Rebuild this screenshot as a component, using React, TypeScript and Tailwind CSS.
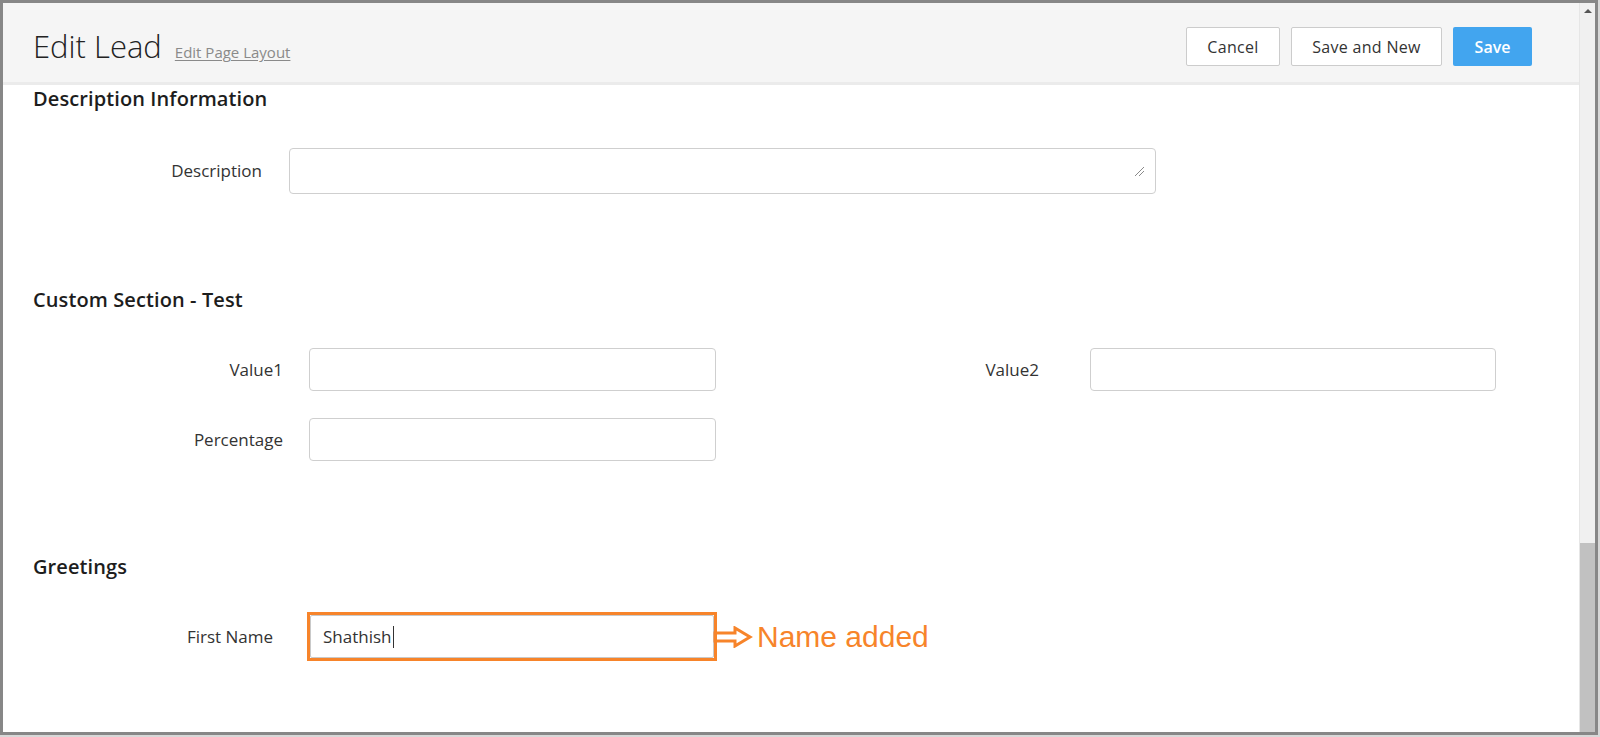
import React from "react";

const font = { fontFamily: '"Open Sans", "Liberation Sans", sans-serif' };

function Field({ className = "" }: { className?: string }) {
  return (
    <div
      className={`h-[43px] rounded-[4px] border-[1.5px] border-[#cfcfcf] bg-white ${className}`}
    />
  );
}

export default function App() {
  return (
    <div className="w-[1600px] h-[737px] bg-[#d8d8d8] overflow-hidden" style={font}>
      <div className="w-[1598px] h-[735px] border-[3px] border-[#878787] bg-white flex">
        {/* main */}
        <div className="flex-1 flex flex-col min-w-0">
          {/* header */}
          <div className="h-[82px] shrink-0 bg-[#f5f5f5] border-b-[3px] border-[#ebebeb] flex items-start justify-between pl-[30px] pr-[47px] pt-[24px]">
            <div className="h-[39px] flex items-center">
              <div className="flex items-baseline gap-[13px] mt-[2px]">
                <span className="text-[31px] font-light text-[#222] leading-none">
                  Edit Lead
                </span>
                <span className="text-[15px] text-[#8a8a8a] underline underline-offset-2">
                  Edit Page Layout
                </span>
              </div>
            </div>
            <div className="flex items-center gap-[11px]">
              <button className="w-[94px] h-[39px] rounded-[2px] border-[1.5px] border-[#cccccc] bg-white text-[16px] tracking-[0.3px] text-[#333]">
                Cancel
              </button>
              <button className="w-[151px] h-[39px] rounded-[2px] border-[1.5px] border-[#cccccc] bg-white text-[16px] tracking-[0.3px] text-[#333]">
                Save and New
              </button>
              <button className="w-[79px] h-[39px] rounded-[2px] bg-[#42a5ef] text-[16px] font-semibold text-white">
                Save
              </button>
            </div>
          </div>

          {/* content */}
          <div className="flex-1 flex flex-col pl-[30px]">
            <h2 className="mt-[2px] h-[24px] leading-[24px] text-[20px] font-semibold tracking-[0.1px] text-[#1d1d1d]">
              Description Information
            </h2>

            <div className="mt-[37px] flex items-center">
              <div className="w-[229px] text-right text-[17px] text-[#333]">Description</div>
              <div className="ml-[27px] relative w-[867px] h-[46px] rounded-[4px] border-[1.5px] border-[#cfcfcf] bg-white">
                <svg
                  className="absolute right-[10px] bottom-[16px]"
                  width="11"
                  height="11"
                  viewBox="0 0 11 11"
                >
                  <line x1="1" y1="10" x2="10" y2="1" stroke="#8a8a8a" strokeWidth="1" />
                  <line x1="5" y1="10" x2="10" y2="5" stroke="#8a8a8a" strokeWidth="1" />
                </svg>
              </div>
            </div>

            <h2 className="mt-[94px] h-[24px] leading-[24px] text-[20px] font-semibold tracking-[0.1px] text-[#1d1d1d]">
              Custom Section - Test
            </h2>

            <div className="mt-[36px] flex items-center">
              <div className="w-[250px] text-right text-[17px] text-[#333]">Value1</div>
              <Field className="ml-[26px] w-[407px]" />
              <div className="w-[323px] text-right text-[17px] text-[#333]">Value2</div>
              <Field className="ml-[51px] w-[406px]" />
            </div>

            <div className="mt-[27px] flex items-center">
              <div className="w-[250px] text-right text-[17px] text-[#333]">Percentage</div>
              <Field className="ml-[26px] w-[407px]" />
            </div>

            <h2 className="mt-[94px] h-[24px] leading-[24px] text-[20px] font-semibold tracking-[0.1px] text-[#1d1d1d]">
              Greetings
            </h2>

            <div className="mt-[33px] flex items-center">
              <div className="w-[240px] text-right text-[17px] text-[#333]">First Name</div>
              <div className="ml-[34px] w-[410px] h-[49px] border-[3px] border-[#f7842a] bg-white">
                <div className="h-full rounded-[2px] border border-[#c9c9c9] flex items-center pl-[12px] text-[17px] text-[#333]">
                  Shathish
                  <span className="inline-block w-px h-[22px] bg-[#333] ml-[1px]" />
                </div>
              </div>
              <svg
                className="ml-[-4px]"
                width="40"
                height="22"
                viewBox="0 0 40 22"
              >
                <path
                  d="M2 7 H22 V2 L37 11 L22 20 V15 H2 Z"
                  fill="none"
                  stroke="#f7842a"
                  strokeWidth="3"
                  strokeLinejoin="miter"
                />
              </svg>
              <span
                className="ml-[4px] text-[30px] leading-none text-[#f7842a]"
                style={{ fontFamily: '"Liberation Sans", Arial, sans-serif' }}
              >
                Name added
              </span>
            </div>
          </div>
        </div>

        {/* scrollbar */}
        <div className="w-[16px] shrink-0 bg-[#f0f0f0] border-l border-[#e6e6e6] flex flex-col">
          <div className="h-[14px] flex items-center justify-center">
            <div className="w-0 h-0 border-l-[4px] border-r-[4px] border-b-[4px] border-l-transparent border-r-transparent border-b-[#555] mt-[1px]" />
          </div>
          <div className="flex-1" />
          <div className="h-[189px] bg-[#c1c1c1]" />
        </div>
      </div>
    </div>
  );
}
